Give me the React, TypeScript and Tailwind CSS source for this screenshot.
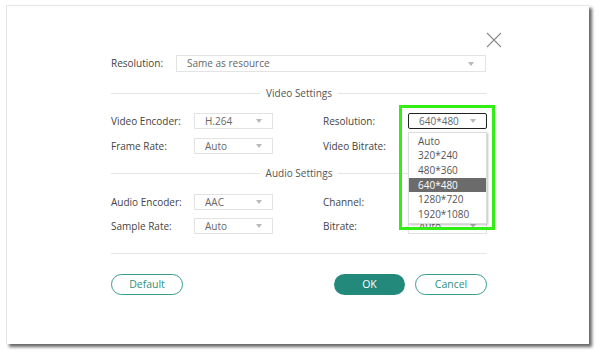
import React from 'react';

const Arrow = () => (
  <svg width="6" height="4" viewBox="0 0 6 4" className="shrink-0">
    <path d="M0 0 L6 0 L3 4 Z" fill="#b8b8b8" />
  </svg>
);

const Select = ({ value, className = '', active = false }: { value: string; className?: string; active?: boolean }) => (
  <div
    className={`flex h-[16px] items-center justify-between bg-white pl-[10px] pr-[10px] text-[10px] text-[#666] ${
      active ? 'rounded-[2px] border border-[#222]' : 'border border-[#e3e3e3]'
    } ${className}`}
  >
    <span>{value}</span>
    <Arrow />
  </div>
);

const Divider = ({ title }: { title: string }) => (
  <div className="flex h-[14px] items-center gap-[6px]">
    <div className="h-px flex-1 bg-[#e4e4e4]" />
    <span className="text-[10px] text-[#555]">{title}</span>
    <div className="h-px flex-1 bg-[#e4e4e4]" />
  </div>
);

// rightValue '' = select sits under the open list, nothing of it shows
const Row = ({ left, leftValue, right, rightValue, children }: { left: string; leftValue: string; right: string; rightValue: string; children?: React.ReactNode }) => (
  <div className="flex h-[16px] items-center text-[10px] text-[#444]">
    <span className="w-[83px]">{left}</span>
    <Select value={leftValue} className="w-[79px]" />
    <span className="ml-[50px] w-[85px]">{right}</span>
    {children ?? <Select value={rightValue} className="w-[79px]" />}
  </div>
);

const options = ['Auto', '320*240', '480*360', '640*480', '1280*720', '1920*1080'];

export default function App() {
  return (
    <div className="h-[354px] w-[600px] bg-white pl-[6px] pt-[5px]" style={{ fontFamily: '"Open Sans", "Noto Sans", sans-serif' }}>
      <div className="relative h-[339px] w-[583px] border-l border-t border-[#e6e6e6] bg-white shadow-[3px_3px_3px_rgba(0,0,0,0.6)]">
        {/* close */}
        <button className="absolute left-[479px] top-[26px] h-[16px] w-[16px]">
          <svg width="16" height="16" viewBox="0 0 16 16">
            <path d="M1 1 L15 15 M15 1 L1 15" stroke="#8a8a8a" strokeWidth="1.1" />
          </svg>
        </button>

        <div className="w-[480px] pl-[104px] pt-[49px]">
          <div className="flex h-[17px] items-center text-[10px] text-[#444]">
            <span className="w-[65px]">Resolution:</span>
            <div className="flex h-[17px] w-[310px] items-center justify-between border border-[#e3e3e3] pl-[10px] pr-[11px] text-[#666]">
              <span>Same as resource</span>
              <Arrow />
            </div>
          </div>

          <div className="mt-[14px]">
            <Divider title="Video Settings" />
          </div>

          <div className="mt-[13px]">
            <Row left="Video Encoder:" leftValue="H.264" right="Resolution:" rightValue="640*480">
              <div className="relative">
                <Select value="640*480" className="w-[79px]" active />
                <div className="absolute left-0 top-[19px] z-10 w-[79px] border border-[#dcdcdc] bg-white py-[1px] shadow-[1px_1px_2px_rgba(0,0,0,0.25)]">
                  {options.map((o) => (
                    <div
                      key={o}
                      className={`flex h-[14.6px] items-center pl-[9px] text-[10px] ${
                        o === '640*480' ? 'bg-[#6b6b6b] text-white' : 'text-[#555]'
                      }`}
                    >
                      {o}
                    </div>
                  ))}
                </div>
                <div className="pointer-events-none absolute left-[-9px] top-[-8px] z-20 h-[125px] w-[96px] border-[3px] border-[#33ee14]" />
              </div>
            </Row>
          </div>

          <div className="mt-[9px]">
            <Row left="Frame Rate:" leftValue="Auto" right="Video Bitrate:" rightValue="" />
          </div>

          <div className="mt-[12px]">
            <Divider title="Audio Settings" />
          </div>

          <div className="mt-[14px]">
            <Row left="Audio Encoder:" leftValue="AAC" right="Channel:" rightValue="" />
          </div>

          <div className="mt-[8px]">
            <Row left="Sample Rate:" leftValue="Auto" right="Bitrate:" rightValue="Auto" />
          </div>

          <div className="mt-[19px] h-px bg-[#e6e6e6]" />

          <div className="mt-[20px] flex items-center text-[10.5px]">
            <button className="h-[21px] w-[72px] rounded-full border border-[#3a9c8f] text-[#2f8f82]">Default</button>
            <button className="ml-auto h-[21px] w-[71px] rounded-full bg-[#22897b] text-white">OK</button>
            <button className="ml-[10px] h-[21px] w-[72px] rounded-full border border-[#3a9c8f] text-[#2f8f82]">Cancel</button>
          </div>
        </div>
      </div>
    </div>
  );
}
